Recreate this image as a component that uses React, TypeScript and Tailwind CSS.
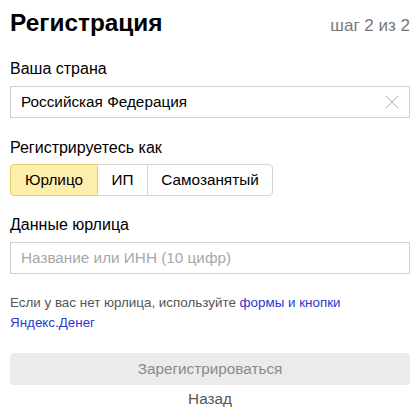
import { useState } from 'react';

const font = { fontFamily: '"Liberation Sans", Arial, sans-serif' };

const kinds = [
  { name: 'Юрлицо', cls: 'w-[88px] rounded-l-[4px]' },
  { name: 'ИП', cls: 'ml-[-1px] w-[51px]' },
  { name: 'Самозанятый', cls: 'ml-[-1px] w-[126px] rounded-r-[4px]' },
];

export default function App() {
  const [kind, setKind] = useState('Юрлицо');
  const [country, setCountry] = useState('Российская Федерация');
  const [company, setCompany] = useState('');

  return (
    <div style={font} className="flex w-[420px] flex-col bg-white px-[10px] pt-[7px] text-black">
      <div className="flex items-baseline justify-between">
        <h1 className="text-[24.4px] font-bold leading-[32px]">Регистрация</h1>
        <span className="text-[17px] text-[#777]">шаг 2 из 2</span>
      </div>

      <label htmlFor="country" className="mt-[20px] block text-[16px] leading-[20px]">
        Ваша страна
      </label>
      <div className="mt-[7px] flex h-[32px] items-center border border-[#d0d0d0]">
        <input
          id="country"
          value={country}
          onChange={(e) => setCountry(e.target.value)}
          className="h-full flex-1 bg-transparent pl-[10px] text-[15.3px] outline-none"
        />
        <button type="button" onClick={() => setCountry('')} className="mr-[9px] flex h-[16px] w-[16px] items-center justify-center">
          <svg width="14" height="14" viewBox="0 0 14 14">
            <path d="M1 1L13 13M13 1L1 13" stroke="#b5b5b5" strokeWidth="1" />
          </svg>
        </button>
      </div>

      <div className="mt-[20px] text-[16px] leading-[20px]">Регистрируетесь как</div>
      <div className="mt-[6px] flex h-[32px] self-start">
        {kinds.map((k) => (
          <button
            key={k.name}
            type="button"
            onClick={() => setKind(k.name)}
            className={
              'h-full border text-center text-[15.3px] ' +
              k.cls +
              ' ' +
              (kind === k.name ? 'relative z-10 border-[#e5ce6a] bg-[#feeeac]' : 'border-[#d5d5d5] bg-white')
            }
          >
            {k.name}
          </button>
        ))}
      </div>

      <label htmlFor="company" className="mt-[19px] block text-[16px] leading-[20px]">
        Данные юрлица
      </label>
      <input
        id="company"
        value={company}
        onChange={(e) => setCompany(e.target.value)}
        placeholder="Название или ИНН (10 цифр)"
        className="mt-[7px] h-[32px] border border-[#d0d0d0] px-[10px] text-[15.3px] outline-none placeholder:text-[#a8a8a8]"
      />

      <p className="mt-[19px] text-[13.4px] leading-[20px] text-[#555]">
        Если у вас нет юрлица, используйте{' '}
        <a href="#" className="text-[#2a38cf]">
          формы и кнопки Яндекс.Денег
        </a>
      </p>

      <button type="button" disabled className="mt-[20px] h-[32px] rounded-[4px] bg-[#ebebeb] text-[15.3px] text-[#8a8a8a]">
        Зарегистрироваться
      </button>
      <button type="button" className="mt-[4px] self-center text-[15.3px] leading-[20px] text-[#555]">
        Назад
      </button>
    </div>
  );
}
